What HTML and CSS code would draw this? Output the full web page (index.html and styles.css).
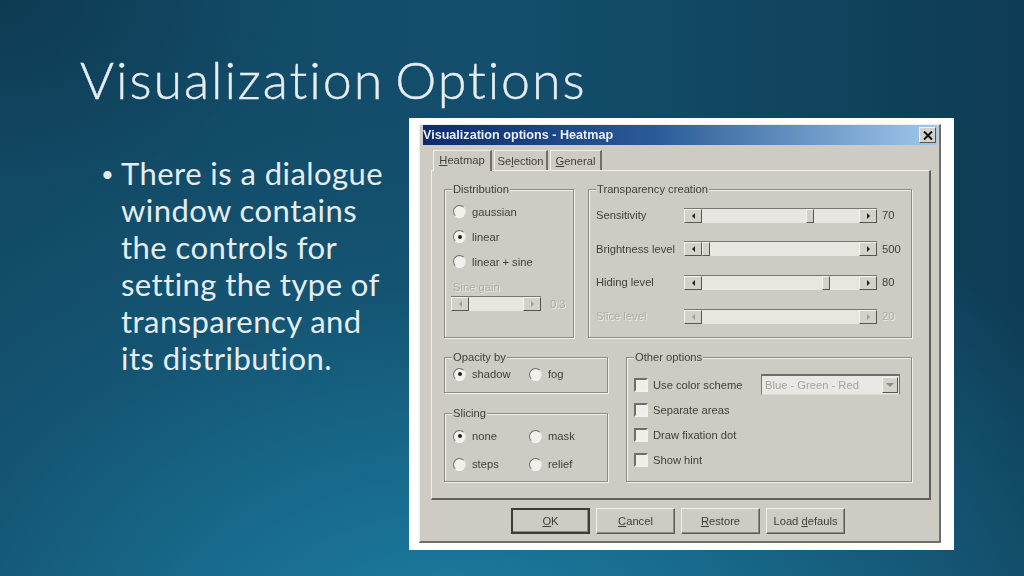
FILE: index.html
```html
<!DOCTYPE html>
<html lang="en">
<head>
<meta charset="utf-8">
<title>Visualization Options</title>
<link rel="stylesheet" href="styles.css">
</head>
<body>
<main class="slide">
  <header class="head"><h1>Visualization Options</h1></header>
  <div class="content">
    <div class="bullets">
      <span class="dot">•</span>
      <p>There is a dialogue<br>window contains<br>the controls for<br>setting the type of<br>transparency and<br>its distribution.</p>
    </div>
    <figure class="shot">
      <div class="window">
        <div class="titlebar"><span>Visualization options - Heatmap</span><span class="close"><svg viewBox="0 0 10 9" width="10" height="9"><path d="M1 0.5 9 8.5M9 0.5 1 8.5" stroke="#111" stroke-width="2" fill="none"/></svg></span></div>
        <div class="tabs">
          <span class="tab active"><u>H</u>eatmap</span>
          <span class="tab sel">Se<u>l</u>ection</span>
          <span class="tab gen"><u>G</u>eneral</span>
        </div>
        <div class="panel">
          <div class="row top">
            <section class="group dist">
              <span class="legend">Distribution</span>
              <label class="opt"><i class="radio"></i>gaussian</label>
              <label class="opt"><i class="radio on"></i>linear</label>
              <label class="opt"><i class="radio"></i>linear + sine</label>
              <div class="off sine-label">Sine gain</div>
              <div class="sine">
                <div class="slider off-slider"><b class="arrow l"></b><span class="track"></span><b class="arrow r"></b></div>
                <span class="off">0.3</span>
              </div>
            </section>
            <section class="group trans">
              <span class="legend">Transparency creation</span>
              <div class="srow"><span>Sensitivity</span><div class="slider"><b class="arrow l"></b><span class="track"><em class="thumb" style="left:66%"></em></span><b class="arrow r"></b></div><span>70</span></div>
              <div class="srow"><span>Brightness level</span><div class="slider"><b class="arrow l"></b><span class="track"><em class="thumb" style="left:0"></em></span><b class="arrow r"></b></div><span>500</span></div>
              <div class="srow"><span>Hiding level</span><div class="slider"><b class="arrow l"></b><span class="track"><em class="thumb" style="left:76.4%"></em></span><b class="arrow r"></b></div><span>80</span></div>
              <div class="srow off"><span>Slice level</span><div class="slider off-slider"><b class="arrow l"></b><span class="track"></span><b class="arrow r"></b></div><span>20</span></div>
            </section>
          </div>
          <div class="row bottom">
            <div class="stack">
              <section class="group opacity">
                <span class="legend">Opacity by</span>
                <div class="pair">
                  <label class="opt"><i class="radio on"></i>shadow</label>
                  <label class="opt"><i class="radio"></i>fog</label>
                </div>
              </section>
              <section class="group slicing">
                <span class="legend">Slicing</span>
                <div class="pair tall">
                  <label class="opt"><i class="radio on"></i>none</label>
                  <label class="opt"><i class="radio"></i>mask</label>
                  <label class="opt"><i class="radio"></i>steps</label>
                  <label class="opt"><i class="radio"></i>relief</label>
                </div>
              </section>
            </div>
            <section class="group other">
              <span class="legend">Other options</span>
              <div class="check first">
                <label class="opt"><i class="box"></i>Use color scheme</label>
                <div class="combo"><span>Blue - Green - Red</span><b class="drop"></b></div>
              </div>
              <div class="check"><label class="opt"><i class="box"></i>Separate areas</label></div>
              <div class="check"><label class="opt"><i class="box"></i>Draw fixation dot</label></div>
              <div class="check"><label class="opt"><i class="box"></i>Show hint</label></div>
            </section>
          </div>
        </div>
        <div class="actions">
          <span class="btn default"><u>O</u>K</span>
          <span class="btn"><u>C</u>ancel</span>
          <span class="btn"><u>R</u>estore</span>
          <span class="btn">Load <u>d</u>efauls</span>
        </div>
      </div>
    </figure>
  </div>
</main>
</body>
</html>
```
FILE: styles.css
```css
* { box-sizing: border-box; }
html, body { margin: 0; padding: 0; }
body { width: 1024px; height: 576px; overflow: hidden; }

.slide {
  width: 1024px;
  height: 576px;
  overflow: hidden;
  color: #e6edf1;
  font-family: Lato, "Open Sans", sans-serif;
  font-variant-ligatures: none;
  background:
    radial-gradient(ellipse 300px 200px at 0 0, rgba(11,52,72,.7) 0%, rgba(11,52,72,0) 100%),
    radial-gradient(ellipse 760px 560px at 44% 118%, #1d82a8 0%, #186c8e 35%, #145472 70%, rgba(20,84,114,0) 100%),
    linear-gradient(90deg, #124a66 0%, #134e6c 50%, #0e3c54 100%);
}
.head { height: 118px; padding: 49px 0 0 80px; }
h1 {
  margin: 0;
  font-size: 52px;
  line-height: 60px;
  font-weight: 300;
  letter-spacing: 1.9px;
  word-spacing: -5px;
  white-space: nowrap;
  -webkit-text-stroke: 0.4px #e6edf1;
}
.content { display: flex; height: 432px; }
.bullets { width: 409px; padding: 37px 0 0 101px; display: flex; font-size: 31px; line-height: 37px; letter-spacing: 0.45px; }
.dot { width: 20px; flex: none; font-size: 22px; }
.bullets p { margin: 0; white-space: nowrap; }

.shot { margin: 0; width: 545px; height: 432px; background: #fff; padding: 6px 0 0 10px; }
.window {
  width: 522px;
  height: 419px;
  padding: 0 2px 0 3px;
  background: #cdcbc3;
  border-right: 2px solid #6f6e69;
  border-bottom: 2px solid #6f6e69;
  border-left: 1px solid #eeeeea;
  border-top: 1px solid #eeeeea;
  font-family: "Liberation Sans", Arial, sans-serif;
  font-size: 11.2px;
  color: #3f3f3a;
  filter: blur(0.7px);
}
.titlebar {
  height: 20px;
  display: flex;
  align-items: center;
  justify-content: space-between;
  padding-right: 1px;
  background: linear-gradient(90deg, #0e2a6e 0%, #2a5b96 45%, #a0c8ec 100%);
  color: #e9eff7;
  font-weight: 700;
  font-size: 12.6px;
}
.close {
  width: 17px; height: 16px;
  display: flex; align-items: center; justify-content: center;
  background: #d3d1c9;
  border: 1px solid; border-color: #f3f3ef #55544f #55544f #f3f3ef;
}
.tabs { height: 25px; display: flex; align-items: flex-end; padding-left: 10px; gap: 2px; }
.tab {
  height: 20px; width: 52px;
  display: flex; align-items: center; justify-content: center;
  border: 1px solid #efefeb; border-bottom: 0;
  border-right: 2px solid #6f6e69;
  background: #cdcbc3;
}
.tab.active { width: 59px; height: 21px; margin-bottom: -1px; position: relative; z-index: 1; padding-bottom: 2px; }
.tab.sel { width: 54px; }
.tab.gen { width: 52px; }

.panel {
  width: 500px; height: 330px;
  margin-left: 8px;
  padding: 18px 0 0 12px;
  background: #cdcbc3;
  border: 1px solid #efefeb;
  border-right: 2px solid #5f5e59;
  border-bottom: 2px solid #5f5e59;
  display: flex;
  flex-direction: column;
  gap: 19px;
}
.row { display: flex; }
.row.top { height: 149px; gap: 14px; }
.row.bottom { height: 125px; gap: 18px; }
.stack { width: 164px; display: flex; flex-direction: column; gap: 20px; }

.group { position: relative; border: 1px solid #8b8a84; box-shadow: 1px 1px 0 #f1f1ed, inset 1px 1px 0 #f1f1ed; }
.legend { position: absolute; top: -8px; left: 7px; padding: 0 1px; background: #cdcbc3; line-height: 14px; white-space: nowrap; }
.opt { display: flex; align-items: center; height: 25px; white-space: nowrap; }

.radio {
  width: 13px; height: 13px; flex: none;
  margin-right: 6px;
  border-radius: 50%;
  background: #f1f0ec;
  border: 1px solid; border-color: #6e6d68 #e6e5e0 #fff #6e6d68;
  display: flex; align-items: center; justify-content: center;
}
.radio.on::after { content: ""; width: 4px; height: 4px; border-radius: 50%; background: #222; }
.box {
  width: 14px; height: 14px; flex: none;
  margin-right: 5px;
  background: #efeeea;
  border: 2px solid; border-color: #6e6d68 #f1f0ec #f1f0ec #6e6d68;
}

.dist { width: 130px; padding: 9px 0 0 8px; }
.off { color: #aeaca4; text-shadow: 1px 1px 0 #e9e8e3; }
.sine-label { margin-top: 6px; height: 14px; line-height: 14px; }
.sine { display: flex; align-items: center; gap: 9px; margin: 2px 0 0 -2px; }
.sine .slider { width: 90px; }

.slider { display: flex; height: 15px; width: 193px; flex: none; border-top: 1px solid #77766f; }
.arrow {
  width: 18px; flex: none;
  background: #d3d1c9;
  border: 1px solid; border-color: #f3f3ef #56554f #56554f #f3f3ef;
  display: flex; align-items: center; justify-content: center;
}
.arrow::after { content: ""; border: 3px solid transparent; }
.arrow.l::after { border-right-color: #222; border-left-width: 0; }
.arrow.r::after { border-left-color: #222; border-right-width: 0; }
.track { flex: 1; position: relative; background: #e7e6e1; }
.thumb {
  position: absolute; top: 0; bottom: 0; width: 8px;
  background: #d3d1c9;
  border: 1px solid; border-color: #f3f3ef #56554f #56554f #f3f3ef;
}
.off-slider .arrow::after { opacity: .3; }

.trans { width: 324px; padding: 17px 0 0 7px; display: flex; flex-direction: column; gap: 17.7px; }
.srow { display: grid; grid-template-columns: 83px 193px auto; column-gap: 5px; align-items: center; height: 16px; }

.opacity { height: 36px; padding: 6px 0 0 8px; }
.slicing { height: 69px; padding: 8px 0 0 8px; }
.pair { display: grid; grid-template-columns: 76px auto; }
.opacity .opt { height: 20px; }
.pair.tall { grid-auto-rows: 28px; }
.pair.tall .opt { height: 28px; }
.other { width: 286px; padding: 14px 0 0 7px; }
.check { height: 25px; display: flex; align-items: center; }
.check.first { justify-content: space-between; padding-right: 11px; }
.combo {
  width: 139px; height: 21px;
  display: flex; align-items: center; justify-content: space-between;
  padding-left: 3px;
  background: #e9e8e4;
  color: #a5a39b;
  border: 1px solid; border-color: #6e6d68 #77766f #d9d8d3 #77766f;
  border-width: 2px 1px 1px 1px;
}
.drop {
  width: 16px; height: 16px; margin-right: 1px;
  display: flex; align-items: center; justify-content: center;
  background: #d3d1c9;
  border: 1px solid; border-color: #f3f3ef #56554f #56554f #f3f3ef;
}
.drop::after { content: ""; border: 4px solid transparent; border-top-color: #8c8b85; border-bottom-width: 0; }

.actions { display: flex; gap: 6px; padding: 8px 0 0 88px; }
.btn {
  width: 79px; height: 26px;
  display: flex; align-items: center; justify-content: center;
  gap: 0;
  white-space: pre;
  background: #cdcbc3;
  border: 1px solid; border-color: #f1f1ed #5c5b55 #5c5b55 #f1f1ed;
  box-shadow: inset -1px -1px 0 #8b8a84;
}
.btn.default { border: 2px solid #3d3c37; }
```
